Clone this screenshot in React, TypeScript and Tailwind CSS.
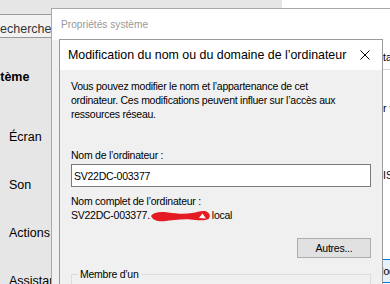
export default function App() {
  return (
    <div className="relative w-[390px] h-[284px] overflow-hidden bg-[#e6e6e6] font-['Liberation_Sans',Arial,sans-serif] text-black">
      {/* Settings window (background) */}
      <div className="flex w-[51px] flex-col overflow-hidden whitespace-nowrap pt-[14px]">
        <div className="h-[24px] border-y border-[#9a9a9a] bg-[#f2f2f2] pt-[6px] text-[12.5px] leading-[16px] text-[#333]">
          <span className="ml-[-9px]">Rechercher un paramètre</span>
        </div>
        <div className="mt-[31px] ml-[-22px] text-[12.5px] font-bold leading-[16px]">Système</div>
        <div className="mt-[44px] flex flex-col gap-[32px] pl-[9px] text-[12.5px] leading-[16px]">
          <div>Écran</div>
          <div>Son</div>
          <div>Actions</div>
          <div>Assistant de concentration</div>
        </div>
      </div>

      {/* another window, top right */}
      <div className="absolute left-[282px] top-0 h-[8px] w-[108px] bg-white" />

      {/* Propriétés système window */}
      <div className="absolute left-[51px] top-[8px] flex h-[290px] w-[360px] flex-col border-l border-t border-[#aaaaaa] bg-[#f0f0f0]">
        <div className="flex h-[31px] items-center bg-white pl-[9px] text-[10.2px] text-[#999999]">Propriétés système</div>
        <div className="flex flex-1">
          <div className="w-[7px]" />
          <div className="flex-1 bg-white">
            <div className="h-[30px] border-b border-[#d9d9d9]" />
          </div>
        </div>
        <div className="absolute left-[331px] top-[41px] text-[10.5px] leading-[14px]">ta</div>
        <div className="absolute left-[331px] top-[92px] text-[10.5px] leading-[14px]">r v</div>
        <div className="absolute left-[331px] top-[159px] text-[10.5px] leading-[14px]">IS</div>
        <div className="absolute left-[301px] top-[250px] flex h-[24px] w-[100px] items-center border border-[#0078d7] bg-[#e5f1fb] pl-[21px] text-[10.5px] leading-[14px] tracking-[-0.25px]">
          Modifier...
        </div>
      </div>

      {/* Dialog */}
      <div className="absolute left-[59px] top-[39px] flex h-[260px] w-[324px] flex-col border border-[#9a9a9a] bg-[#f0f0f0]">
        <div className="flex h-[30px] shrink-0 items-center justify-between bg-white pl-[8px] pr-[12px]">
          <span className="text-[12.4px] whitespace-nowrap">Modification du nom ou du domaine de l’ordinateur</span>
          <svg width="10" height="10" viewBox="0 0 10 10" className="shrink-0">
            <path d="M0.5 0.5 L9.5 9.5 M9.5 0.5 L0.5 9.5" stroke="#000" strokeWidth="1" fill="none" />
          </svg>
        </div>
        <div className="flex flex-col px-[11px] pt-[9px] text-[10.5px] leading-[14px] tracking-[-0.25px]">
          <p>
            Vous pouvez modifier le nom et l’appartenance de cet
            <br />
            ordinateur. Ces modifications peuvent influer sur l’accès aux
            <br />
            ressources réseau.
          </p>
          <div className="mt-[27px]">Nom de l’ordinateur :</div>
          <div className="mt-[2px] flex h-[23px] w-[300px] items-center border border-[#7a7a7a] bg-white pl-[2px]">SV22DC-003377</div>
          <div className="mt-[7px]">Nom complet de l’ordinateur :</div>
          <div className="flex items-start whitespace-nowrap">
            <span>SV22DC-003377.</span>
            <span className="inline-block h-[14px] w-[62px]">
              <svg width="62" height="14" viewBox="0 0 62 14">
                <path
                  d="M1 8 C 4 4, 10 3.5, 18 4.5 C 26 5.5, 34 6.5, 42 5 C 47 4, 51 2.5, 55 3 C 59 4, 61 7.5, 59 10.5 C 56 13, 48 12.5, 40 11.5 C 32 10.8, 22 12.5, 14 13.2 C 8 13.6, 3 12.5, 1 8 Z"
                  fill="#e51b23"
                />
                <path d="M49 10 L52.5 5.5 L56 10.5 Z" fill="#ffffff" />
              </svg>
            </span>
            <span>local</span>
          </div>
          <button className="mt-[16px] flex h-[20px] w-[74px] items-center justify-center self-end border border-[#adadad] bg-[#e1e1e1] text-[10.5px] tracking-[-0.25px]">
            Autres...
          </button>
          <fieldset className="mt-[9px] h-[60px] w-[300px] border border-[#dcdcdc]">
            <legend className="ml-[6px] px-[2px] leading-[14px]">Membre d’un</legend>
          </fieldset>
        </div>
      </div>
    </div>
  );
}
